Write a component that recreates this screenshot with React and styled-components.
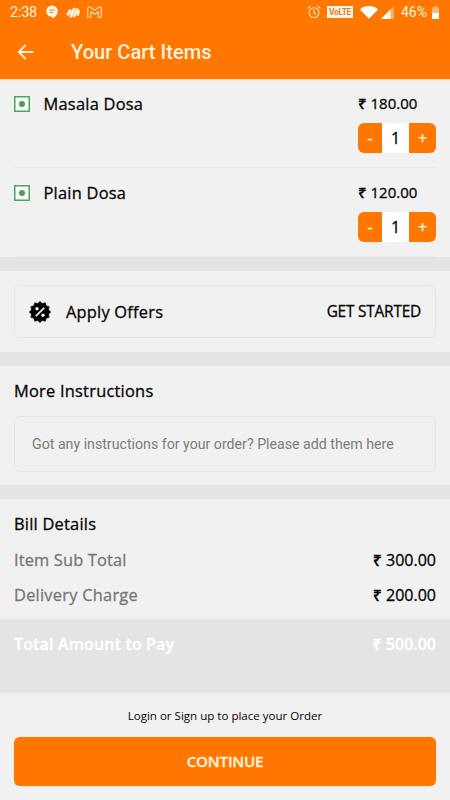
import React from "react";
import styled, { createGlobalStyle } from "styled-components";

const ORANGE = "#ff7700";
const PAPER = "#f1f1f1";
const BAND = "#e4e4e4";

const Global = createGlobalStyle`
  *, *::before, *::after { box-sizing: border-box; }
  body { margin: 0; background: ${PAPER}; }
  button { border: 0; padding: 0; font: inherit; color: inherit; background: none; letter-spacing: inherit; }
`;

const Screen = styled.div`
  width: 450px;
  height: 800px;
  overflow: hidden;
  display: flex;
  flex-direction: column;
  background: ${PAPER};
  color: #050505;
  font-family: "Open Sans", "Noto Sans", sans-serif;
  font-weight: 500;
  font-size: 16.4px;
  -webkit-text-stroke: 0.3px currentColor;
`;

const Header = styled.header`
  height: 79px;
  flex: none;
  background: ${ORANGE};
  color: #fff3df;
  font-family: Roboto, sans-serif;
  box-shadow: 0 1px 1px #ffdcc0;
  -webkit-text-stroke: 0;
`;

const StatusBar = styled.div`
  height: 24px;
  display: flex;
  justify-content: space-between;
  padding: 0 11px 0 10px;
  font-size: 14.5px;
  font-weight: 400;
`;

const StatusGroup = styled.div`
  display: flex;
  align-items: center;
  svg { display: block; flex: none; }
`;

const StatusItem = styled.span`
  margin-left: ${(p) => p.$gap}px;
`;

const Clock = styled.span`
  width: 28px;
  line-height: 24px;
  padding-top: 1px;
  white-space: nowrap;
  letter-spacing: -0.25px;
`;

const Charge = styled.span`
  display: block;
  width: 26px;
  line-height: 24px;
  white-space: nowrap;
  font-size: 14px;
`;

const TitleBar = styled.div`
  height: 55px;
  display: flex;
  align-items: center;
  padding-left: 16px;
  gap: 35px;
`;

const BackButton = styled.button`
  width: 20px;
  height: 20px;
  svg { display: block; }
`;

const Title = styled.h1`
  margin: 0;
  padding-top: 1px;
  font-size: 20.1px;
  line-height: 24px;
  font-weight: 500;
`;

const Items = styled.section`
  height: 178px;
  flex: none;
  padding: 0 14px;
`;

const ItemRow = styled.article`
  height: 89px;
  display: flex;
  padding-top: 14px;
  border-bottom: 1px solid #e9e9e9;
`;

const VegMark = styled.span`
  width: 16px;
  height: 16px;
  margin-top: 3px;
  display: grid;
  place-items: center;
  border: 1px solid #4da664;
  background: #f6fbf6;
  box-shadow: inset 0 0 0 0.5px #4da664;
  &::after {
    content: "";
    width: 6px;
    height: 6px;
    border-radius: 50%;
    background: #4b9c5e;
  }
`;

const ItemName = styled.span`
  flex: 1;
  padding-left: 13.5px;
  line-height: 22px;
  letter-spacing: 0.25px;
`;

const ItemSide = styled.div`
  width: 78px;
`;

const Price = styled.div`
  line-height: 20px;
  font-size: 15px;
  white-space: nowrap;
`;

const Stepper = styled.div`
  margin-top: 10px;
  height: 30px;
  display: grid;
  grid-template-columns: 24px 27px 27px;
  border-radius: 6px;
  overflow: hidden;
  background: ${ORANGE};
  text-align: center;
  font-size: 16px;
  line-height: 31px;
`;

const StepButton = styled.button`
  color: #fff3df;
  font-size: 16px;
  line-height: 31px;
`;

const Count = styled.span`
  background: #fff;
`;

const Band = styled.div`
  height: 14px;
  flex: none;
  background: ${BAND};
`;

const Section = styled.section`
  height: ${(p) => p.$h}px;
  flex: none;
  padding: 14px 14px 0;
`;

const Heading = styled.h2`
  margin: 0;
  font-size: 16.4px;
  line-height: 22px;
  font-weight: 500;
  letter-spacing: 0.24px;
`;

const OfferCard = styled.div`
  height: 53px;
  display: flex;
  align-items: center;
  padding: 0 14px;
  border: 1px solid #e7e7e7;
  border-radius: 5px;
  svg { display: block; }
`;

const OfferLabel = styled.span`
  flex: 1;
  padding-left: 15px;
  line-height: 22px;
  letter-spacing: 0.22px;
`;

const OfferAction = styled.button`
  font-size: 15.4px;
  line-height: 21px;
  letter-spacing: -0.2px;
`;

const Note = styled.div`
  margin-top: 14px;
  height: 56px;
  padding: 0 17px;
  border: 1px solid #e6e6e6;
  border-radius: 6px;
  color: #7c7c7c;
  font-family: Roboto, sans-serif;
  font-size: 14.18px;
  font-weight: 400;
  line-height: 55px;
  white-space: nowrap;
  -webkit-text-stroke: 0;
`;

const BillRow = styled.div`
  display: flex;
  justify-content: space-between;
  line-height: 22px;
  margin-top: ${(p) => p.$mt}px;
`;

const BillLabel = styled.span`
  color: #777;
  letter-spacing: ${(p) => p.$track}px;
`;

const Amount = styled.span`
  font-size: 16px;
`;

const Total = styled.div`
  height: 74px;
  flex: none;
  display: flex;
  justify-content: space-between;
  padding: 14px 14px 0;
  background: ${BAND};
  color: #fff;
  font-size: 16px;
  font-weight: 600;
  line-height: 22px;
`;

const TotalLabel = styled.span`
  letter-spacing: 0.15px;
`;

const TotalAmount = styled.span`
  font-size: 16px;
`;

const Footer = styled.footer`
  flex: 1;
  padding: 15px 14px 0;
  text-align: center;
`;

const Hint = styled.p`
  margin: 0;
  font-size: 11.55px;
  line-height: 16px;
  font-weight: 400;
  -webkit-text-stroke: 0;
`;

const Continue = styled.button`
  display: block;
  width: 100%;
  height: 49px;
  margin-top: 13px;
  padding-bottom: 1px;
  border-radius: 6px;
  background: ${ORANGE};
  box-shadow: 0 0 1px #ffab55;
  color: #fff3df;
  font-size: 15.2px;
  letter-spacing: -0.2px;
  font-weight: 600;
`;

const ChatIcon = () => (
  <svg width="12" height="14" viewBox="0 0 12 14">
    <path d="M6 .5a5.8 5.6 0 0 1 5.8 5.7c0 3.4-2.7 5.6-5.5 7.3v-1.8H6A5.7 5.7 0 0 1 .2 6.2 5.7 5.7 0 0 1 6 .5z" fill="#fffaf0" />
    <path d="M3.2 5h5.6M3.2 7.4h4" stroke={ORANGE} strokeWidth="1" />
  </svg>
);

const StripesIcon = () => (
  <svg width="15" height="13" viewBox="0 0 15 13" fill="none" stroke="#fff1dc" strokeLinecap="round">
    <path d="M2 8.2 4 4.9M5 10.2 8.2 3.2" strokeWidth="3" />
    <path d="m8.3 10.2 3-7M11.8 8.8l1-3.6" strokeWidth="2.4" />
  </svg>
);

const MailIcon = () => (
  <svg width="15" height="12" viewBox="0 0 15 12" fill="none" stroke="#ffe2bd" strokeWidth="1.1" strokeLinejoin="round">
    <path d="M.8 11.2V2.3C.8.9 2.2.4 3.3 1.2l4.2 3.2 4.2-3.2c1.1-.8 2.5-.3 2.5 1.1v8.9h-3V5.6L7.5 8.3 3.8 5.6v5.6z" />
  </svg>
);

const AlarmIcon = () => (
  <svg width="14" height="14" viewBox="0 0 14 14" fill="none" stroke="#ffe8ca" strokeWidth="1.1" strokeLinecap="round">
    <circle cx="7" cy="7.6" r="4.9" />
    <path d="M7 4.8v3l1.7 1.3M.9 3.2l2.4-2M13.1 3.2l-2.4-2" />
  </svg>
);

const VolteBadge = styled.span`
  display: block;
  width: 26px;
  height: 12px;
  background: #fff8ec;
  color: #f07d1a;
  font: 700 8.5px/12px Roboto, sans-serif;
  text-align: center;
  letter-spacing: -0.4px;
`;

const WifiIcon = () => (
  <svg width="18" height="13" viewBox="0 0 18 13">
    <path d="M0 3.4C5-1 13-1 18 3.4L9 12.8z" fill="#fff" />
  </svg>
);

const SignalIcon = () => (
  <svg width="13" height="13" viewBox="0 0 13 13">
    <path d="M13 0v13H0z" fill="#ffad63" />
    <path d="M9.5 3.5V13H0z" fill="#fff" />
  </svg>
);

const BatteryIcon = () => (
  <svg width="7" height="13" viewBox="0 0 7 13">
    <path d="M0 1.5h2V.3h3v1.2h2V7H0z" fill="#ffb879" />
    <path d="M0 7h7v6H0z" fill="#fff" />
  </svg>
);

const ArrowIcon = () => (
  <svg width="20" height="20" viewBox="0 0 20 20" fill="none" stroke="#fff1dc" strokeWidth="1.8">
    <path d="M17.5 10H3M9.6 3 2.8 10l6.8 7" />
  </svg>
);

const BADGE = Array.from({ length: 24 }, (_, i) => {
  const r = i % 2 ? 8.8 : 10.6;
  const a = (i * Math.PI) / 12 - Math.PI / 2;
  return `${(11 + r * Math.cos(a)).toFixed(2)},${(11 + r * Math.sin(a)).toFixed(2)}`;
}).join(" ");

const OfferIcon = () => (
  <svg width="22" height="22" viewBox="0 0 22 22">
    <polygon points={BADGE} stroke="#000" strokeWidth=".6" strokeLinejoin="round" />
    <path d="M6.8 15.2 15.2 6.8" stroke={PAPER} strokeWidth="1.7" />
    <circle cx="8" cy="7.8" r="1.7" fill={PAPER} />
    <circle cx="14" cy="14.2" r="1.7" fill={PAPER} />
  </svg>
);

const cart = [
  { name: "Masala Dosa", price: "₹ 180.00", count: 1 },
  { name: "Plain Dosa", price: "₹ 120.00", count: 1 },
];

export default function App() {
  return (
    <Screen>
      <Global />
      <Header>
        <StatusBar>
          <StatusGroup>
            <Clock>2:38</Clock>
            <StatusItem $gap={8}><ChatIcon /></StatusItem>
            <StatusItem $gap={8}><StripesIcon /></StatusItem>
            <StatusItem $gap={5.5}><MailIcon /></StatusItem>
          </StatusGroup>
          <StatusGroup>
            <AlarmIcon />
            <StatusItem $gap={6}><VolteBadge>VoLTE</VolteBadge></StatusItem>
            <StatusItem $gap={7}><WifiIcon /></StatusItem>
            <StatusItem $gap={3}><SignalIcon /></StatusItem>
            <StatusItem $gap={7}><Charge>46%</Charge></StatusItem>
            <StatusItem $gap={5}><BatteryIcon /></StatusItem>
          </StatusGroup>
        </StatusBar>
        <TitleBar>
          <BackButton aria-label="Back"><ArrowIcon /></BackButton>
          <Title>Your Cart Items</Title>
        </TitleBar>
      </Header>
      <Items>
        {cart.map((item) => (
          <ItemRow key={item.name}>
            <VegMark />
            <ItemName>{item.name}</ItemName>
            <ItemSide>
              <Price>{item.price}</Price>
              <Stepper>
                <StepButton>-</StepButton>
                <Count>{item.count}</Count>
                <StepButton>+</StepButton>
              </Stepper>
            </ItemSide>
          </ItemRow>
        ))}
      </Items>
      <Band />
      <Section $h={81}>
        <OfferCard>
          <OfferIcon />
          <OfferLabel>Apply Offers</OfferLabel>
          <OfferAction>GET STARTED</OfferAction>
        </OfferCard>
      </Section>
      <Band />
      <Section $h={119}>
        <Heading>More Instructions</Heading>
        <Note>Got any instructions for your order? Please add them here</Note>
      </Section>
      <Band />
      <Section $h={120}>
        <Heading>Bill Details</Heading>
        <BillRow $mt={14}>
          <BillLabel $track={0.15}>Item Sub Total</BillLabel>
          <Amount>₹ 300.00</Amount>
        </BillRow>
        <BillRow $mt={13}>
          <BillLabel $track={0.25}>Delivery Charge</BillLabel>
          <Amount>₹ 200.00</Amount>
        </BillRow>
      </Section>
      <Total>
        <TotalLabel>Total Amount to Pay</TotalLabel>
        <TotalAmount>₹ 500.00</TotalAmount>
      </Total>
      <Footer>
        <Hint>Login or Sign up to place your Order</Hint>
        <Continue>CONTINUE</Continue>
      </Footer>
    </Screen>
  );
}
